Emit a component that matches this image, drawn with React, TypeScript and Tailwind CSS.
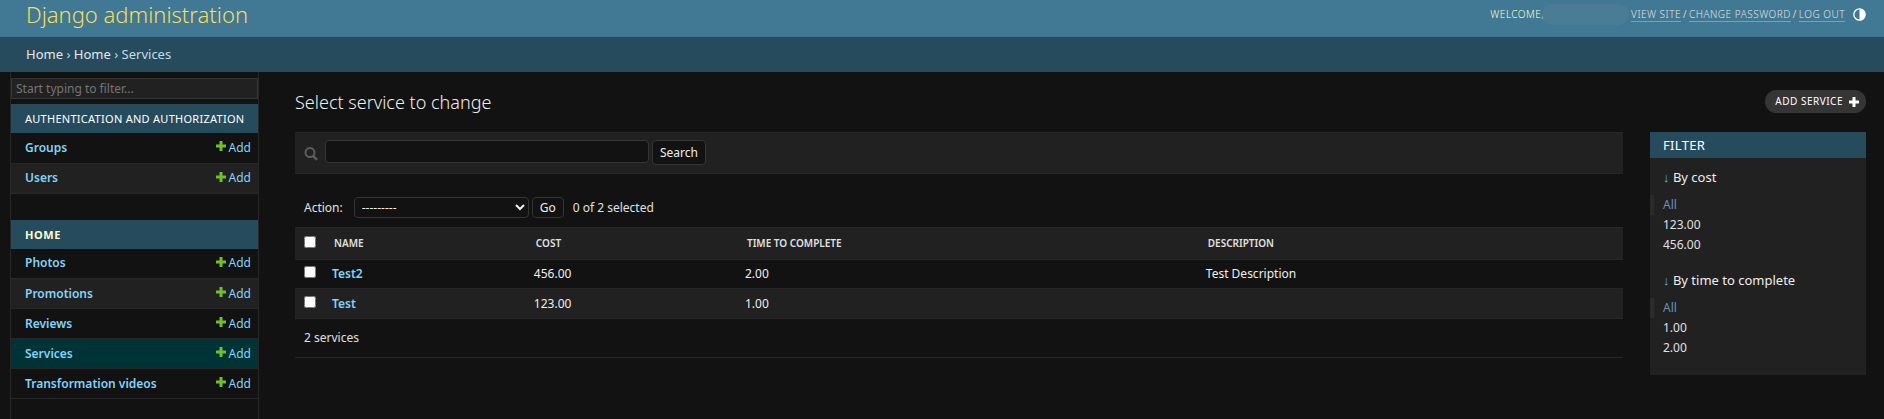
const navModules = [
  { title: "Authentication and Authorization", current: false, items: ["Groups", "Users"] },
  { title: "Home", current: true, items: ["Photos", "Promotions", "Reviews", "Services", "Transformation videos"] },
];

const services = [
  { name: "Test2", cost: "456.00", time: "2.00", description: "Test Description" },
  { name: "Test", cost: "123.00", time: "1.00", description: "" },
];

const filters = [
  { title: "By cost", options: ["All", "123.00", "456.00"] },
  { title: "By time to complete", options: ["All", "1.00", "2.00"] },
];

function PlusIcon({ className }: { className: string }) {
  return (
    <svg viewBox="0 0 10 10" className={className} aria-hidden="true">
      <path d="M3.5 0h3v3.5H10v3H6.5V10h-3V6.5H0v-3h3.5z" fill="currentColor" />
    </svg>
  );
}

function Header() {
  const toolLink = "border-b border-white/30 text-[#e0e0e0] leading-[14px]";
  return (
    <header className="flex h-[37px] items-start justify-between bg-[#417893] pr-[18px] pl-[26px]">
      <h1 className="text-[22px] leading-[28px] font-light text-[#f5dd5d]">
        <a href="#">Django administration</a>
      </h1>
      <div className="flex items-center pt-[6px] text-[10px] leading-[16px] font-light tracking-wider text-[#ffffcc] uppercase">
        <span>Welcome,</span>
        <span className="-my-[3px] -ml-[2px] h-[21px] w-[87px] rounded-full bg-[#4a7c95]" />
        <span className="ml-[2px] flex items-center gap-[2px]">
          <a href="#" className={toolLink}>View site</a>
          <span>/</span>
          <a href="#" className={toolLink}>Change password</a>
          <span>/</span>
          <button type="button" className={`${toolLink} uppercase tracking-wider`}>Log out</button>
        </span>
        <button type="button" aria-label="Toggle theme" className="ml-[8px]">
          <svg viewBox="0 0 24 24" className="size-[13px] text-white" aria-hidden="true">
            <circle cx="12" cy="12" r="10.5" fill="none" stroke="currentColor" strokeWidth="2.4" />
            <path d="M12 1.5a10.5 10.5 0 0 1 0 21z" fill="currentColor" />
          </svg>
        </button>
      </div>
    </header>
  );
}

function Sidebar() {
  return (
    <nav aria-label="Sidebar" className="ml-[10px] w-[249px] shrink-0 border-x border-[#272727] pt-[6px]">
      <input
        type="search"
        aria-label="Filter navigation items"
        placeholder="Start typing to filter..."
        className="block h-[21px] w-full border border-[#353535] bg-[#212121] px-1 text-xs text-[#eeeeee] placeholder:text-[#757575]"
      />
      <div className="mt-[5px] flex flex-col gap-[26px]">
        {navModules.map((module) => (
          <table key={module.title} className="w-full border-collapse">
            <caption
              className={
                module.current
                  ? "h-[29px] bg-[#264b5d] pl-[14px] text-left text-[11px] leading-[30px] font-bold tracking-wider text-[#ffffcc] uppercase"
                  : "h-[29px] bg-[#264b5d] pl-[14px] text-left text-[11px] leading-[30px] tracking-wide whitespace-nowrap text-white uppercase"
              }
            >
              <a href="#">{module.title}</a>
            </caption>
            <tbody>
              {module.items.map((item, i) => (
                <tr
                  key={item}
                  className={
                    item === "Services"
                      ? "h-[30px] border-b border-[#272727] bg-[#003336]"
                      : i % 2 === 1
                        ? "h-[30px] border-b border-[#272727] bg-[#212121]"
                        : "h-[30px] border-b border-[#272727]"
                  }
                >
                  <th scope="row" className="pl-[14px] text-left text-xs font-semibold text-[#81d4fa]">
                    <a href="#">{item}</a>
                  </th>
                  <td className="pr-[7px] text-xs text-[#81d4fa]">
                    <a href="#" className="flex items-center justify-end gap-[3px]">
                      <PlusIcon className="mb-[3px] size-[10px] text-[#70bf2b]" />
                      Add
                    </a>
                  </td>
                </tr>
              ))}
            </tbody>
          </table>
        ))}
      </div>
    </nav>
  );
}

function ServiceTable() {
  const head = "px-[10px] text-left text-[10px] font-semibold text-[#e0e0e0] uppercase";
  return (
    <table className="w-full table-fixed border-collapse text-xs text-[#eeeeee]">
      <colgroup>
        <col className="w-[29px]" />
        <col className="w-[15.2%]" />
        <col className="w-[15.9%]" />
        <col className="w-[34.7%]" />
        <col />
      </colgroup>
      <thead>
        <tr className="h-[32px] border-y border-[#272727] bg-[#212121]">
          <th scope="col" className="pb-1 pl-[9px] text-left">
            <input type="checkbox" aria-label="Select all services" className="block size-[12px]" />
          </th>
          <th scope="col" className={head}>Name</th>
          <th scope="col" className={head}>Cost</th>
          <th scope="col" className={head}>Time to complete</th>
          <th scope="col" className={head}>Description</th>
        </tr>
      </thead>
      <tbody>
        {services.map((s, i) => (
          <tr
            key={s.name}
            className={i % 2 === 1 ? "h-[30px] border-b border-[#272727] bg-[#212121]" : "h-[29px] border-b border-[#272727]"}
          >
            <td className="pb-1 pl-[9px]">
              <input type="checkbox" aria-label={`Select ${s.name}`} className="block size-[12px]" />
            </td>
            <th scope="row" className="px-2 text-left font-semibold text-[#81d4fa]">
              <a href="#">{s.name}</a>
            </th>
            <td className="px-2">{s.cost}</td>
            <td className="px-2">{s.time}</td>
            <td className="px-2">{s.description}</td>
          </tr>
        ))}
      </tbody>
    </table>
  );
}

function FilterPanel() {
  return (
    <aside aria-label="Filters" className="w-[216px] shrink-0 bg-[#212121] pb-[17px]">
      <h2 className="h-[26px] bg-[#264b5d] px-[13px] text-[13px] leading-[27px] tracking-wide text-white uppercase">Filter</h2>
      {filters.map((f, i) => (
        <section key={f.title} className={i === 0 ? "pt-[9px]" : "pt-[15px]"}>
          <h3 className="px-[13px] text-[13px] leading-[20px] text-[#eeeeee]">
            <span className="text-[#4fb8ec]">↓</span> {f.title}
          </h3>
          <ul className="mt-2 text-xs leading-[20px] text-[#e0e0e0]">
            {f.options.map((o) => (
              <li
                key={o}
                className={o === "All" ? "border-l-4 border-[#2b2b2b] pl-[9px] text-[#6a8fc4]" : "pl-[13px]"}
              >
                <a href="#">{o}</a>
              </li>
            ))}
          </ul>
        </section>
      ))}
    </aside>
  );
}

export default function App() {
  const button = "rounded border border-[#353535] bg-[#121212] text-[#eeeeee]";
  return (
    <div className="flex min-h-screen flex-col bg-[#121212] font-['Noto_Sans',sans-serif] text-xs text-[#eeeeee]">
      <Header />
      <nav aria-label="Breadcrumbs" className="h-[35px] bg-[#264b5d] px-[26px] text-[13px] leading-[35px] text-[#c4dce8]">
        <a href="#" className="text-[#e8e8e8]">Home</a> › <a href="#" className="text-[#e8e8e8]">Home</a> › Services
      </nav>
      <div className="flex flex-1">
        <Sidebar />
        <main className="min-w-0 flex-1 pt-[18px] pr-[18px] pl-[36px]">
          <div className="flex items-start justify-between">
            <h1 className="text-lg leading-[24px] font-light text-[#eeeeee]">Select service to change</h1>
            <a
              href="#"
              className="flex h-[23px] items-center gap-[6px] rounded-full bg-[#353535] pr-[7px] pl-[10px] text-[10px] tracking-wider text-white uppercase"
            >
              Add service
              <PlusIcon className="size-[10px]" />
            </a>
          </div>
          <div className="mt-[18px] flex items-start gap-[27px]">
            <div className="min-w-0 flex-1">
              <form
                className="flex h-[42px] items-start border-y border-[#272727] bg-[#212121] pt-[7px] pl-[9px]"
                onSubmit={(e) => e.preventDefault()}
              >
                <label htmlFor="searchbar" aria-label="Search services" className="mt-[7px]">
                  <svg viewBox="0 0 14 14" className="size-[14px] text-[#5c5c5c]" aria-hidden="true">
                    <circle cx="6" cy="5.6" r="4.5" fill="none" stroke="currentColor" strokeWidth="2" />
                    <path d="M9 8.8l4 4" stroke="currentColor" strokeWidth="2.4" />
                  </svg>
                </label>
                <input
                  id="searchbar"
                  type="text"
                  className="ml-[7px] h-[23px] w-[324px] rounded border border-[#353535] bg-[#121212] px-[6px]"
                />
                <button type="submit" className={`ml-[3px] h-[25px] px-[7px] ${button}`}>Search</button>
              </form>
              <div className="mt-[23px] flex h-[21px] items-center pl-[9px]">
                <label htmlFor="action" className="text-[#e0e0e0]">Action:</label>
                <select
                  id="action"
                  className="ml-[11px] h-[21px] w-[175px] rounded border border-[#353535] bg-[#121212] pl-[3px] text-[#eeeeee]"
                >
                  <option>---------</option>
                </select>
                <button type="button" className={`ml-[3px] h-[21px] px-[7px] ${button}`}>Go</button>
                <span className="ml-[9px] text-[#e0e0e0]">0 of 2 selected</span>
              </div>
              <div className="mt-[9px]">
                <ServiceTable />
              </div>
              <p className="border-b border-[#272727] px-[9px] py-[11px] leading-[16px] text-[#e0e0e0]">2 services</p>
            </div>
            <FilterPanel />
          </div>
        </main>
      </div>
    </div>
  );
}
